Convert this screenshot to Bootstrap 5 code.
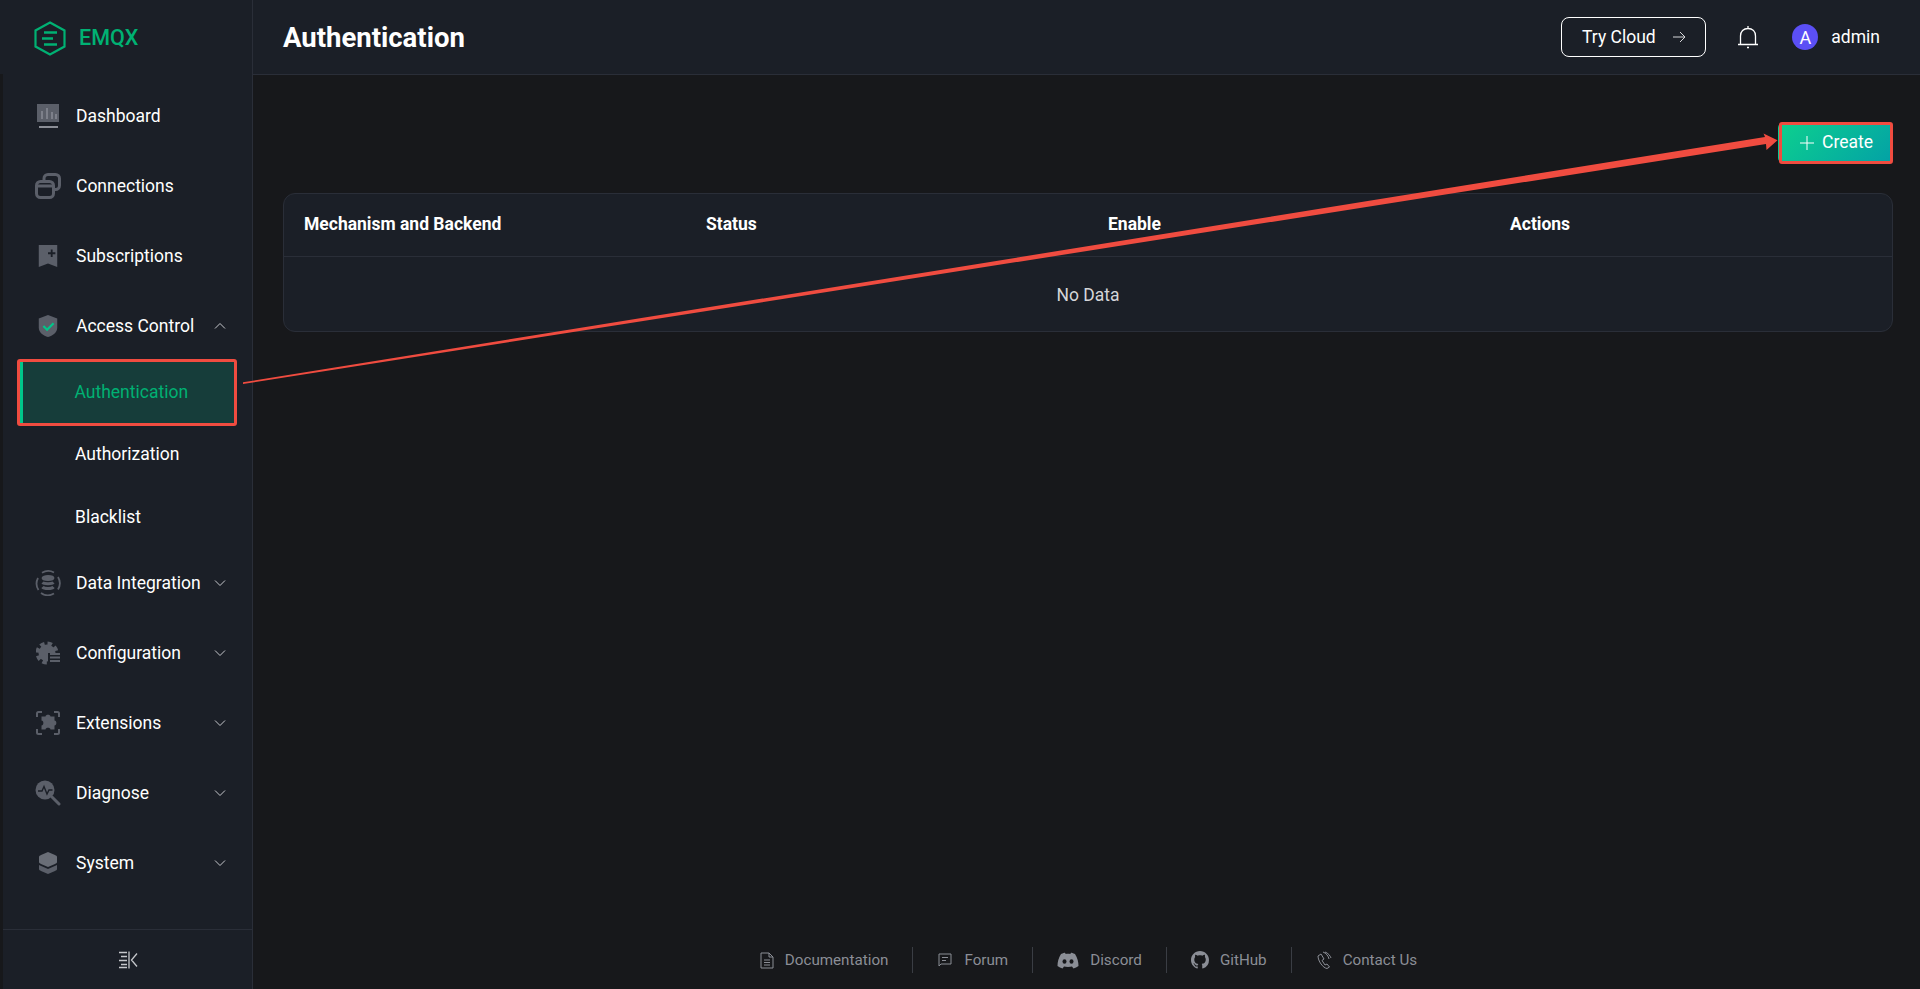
<!DOCTYPE html>
<html lang="en">
<head>
<meta charset="UTF-8" />
<meta name="viewport" content="width=device-width, initial-scale=1.0" />
<title>EMQX Authentication</title>
<link href="https://cdn.jsdelivr.net/npm/bootstrap@5.3.0/dist/css/bootstrap.min.css" rel="stylesheet">
<style>
  html, body { height: 100%; }
  body { background: #17181b; color: #fff; font-family: Roboto, "Liberation Sans", sans-serif; font-size: 17.5px; overflow: hidden; }
  .app-shell { height: 989px; position: relative; }
  .side-col { width: 253px; flex: none; }
  .logo-box { height: 74px; background: #1b1f27; border-right: 1px solid #2a2e38; padding: 2px 0 0 34px; }
  .logo-name { color: #00b173; font-size: 21.5px; font-weight: 500; margin-left: 13px; }
  .side-body { margin-left: 3px; background: #1b1f27; border-right: 1px solid #2a2e38; }
  .menu-list { padding-top: 7px; }
  .menu-row { height: 70px; padding-left: 33px; padding-right: 26px; }
  .menu-ico { width: 24px; height: 24px; margin-right: 16px; flex: none; color: #5b5f69; }
  .ico-lg { width: 26px; height: 26px; margin-left: -1px; margin-right: 15px; }
  .menu-chev { margin-left: auto; width: 12px; height: 12px; color: #c6c8cc; }
  .sub-row { height: 62.5px; padding-left: 72px; position: relative; }
  .sub-active { color: #00b173; background: #163d3a; margin: 1px 18px 0 17px; height: 61px; padding-left: 51.5px; border-left: 3px solid #00c78a; }
  .red-box { position: absolute; border: 3px solid #f04c40; border-radius: 3px; pointer-events: none; }
  .sub-active .red-box { inset: -3px -3px -3px -6px; }
  .collapse-box { height: 60px; border-top: 1px solid #2a2e38; }
  .top-bar { height: 75px; background: #1b1f27; border-bottom: 1px solid #2a2e38; padding: 0 40px 0 30px; }
  .page-title { font-size: 27.5px; font-weight: 700; margin: 0; }
  .cloud-btn { height: 40px; width: 145px; border: 1px solid #fff; border-radius: 8px; color: #fff; font-size: 17.5px; padding: 0; }
  .bell-wrap { margin-left: 31px; margin-right: 33px; line-height: 0; }
  .avatar-dot { width: 26px; height: 26px; border-radius: 50%; background: #5b4ff5; font-size: 18px; margin-right: 13px; }
  .page-body { padding: 48px 27px 0 30px; }
  .create-btn { width: 115px; height: 38px; position: relative; border: 0; border-radius: 4px; color: #fff; font-size: 17.5px; background: linear-gradient(135deg, #0dd08e, #03a1a6); padding: 0 0 1px 2px; margin-top: 1px; }
  .create-btn .red-box { inset: -2px 0 -2px 1px; }
  .table-wrap { margin-top: 31px; background: #1b1f27; border: 1px solid #2a2e38; border-radius: 12px; overflow: hidden; }
  .table-wrap .table { --bs-table-bg: transparent; --bs-table-color: #fff; --bs-table-border-color: #2a2e38; table-layout: fixed; margin: 0; }
  .table-wrap th { height: 62px; padding: 0 20px 2px; vertical-align: middle; font-weight: 700; }
  .table-wrap td { height: 75px; vertical-align: middle; text-align: center; color: #d5d6d9; border-bottom: 0; padding: 2px 0 0; }
  .foot-bar { height: 59px; color: #8b8e96; font-size: 15.2px; padding: 1px 0 0 4px; }
  .foot-link { padding: 0 24px; height: 26px; }
  .foot-link + .foot-link { border-left: 1px solid #3a3d44; }
  .foot-link svg { margin-right: 11px; }
  .arrow-layer { position: absolute; left: 0; top: 0; pointer-events: none; }
</style>
</head>
<body>
<div class="app-shell d-flex">
  <aside class="side-col d-flex flex-column">
    <div class="logo-box d-flex align-items-center">
      <svg width="32" height="35" viewBox="0 0 32 35" fill="none" stroke="#00b173" stroke-width="2.200"><path d="M16 1.500 30.500 9.500V25.500L16 33.500 1.500 25.500V9.500Z"/><path d="M10 11.500H23M8 17.500H19M10 23.500H23" stroke-width="2.400"/></svg>
      <span class="logo-name">EMQX</span>
    </div>
    <div class="side-body flex-grow-1 d-flex flex-column">
      <div class="menu-list flex-grow-1">
        <div class="menu-row d-flex align-items-center">
          <svg class="menu-ico" viewBox="0 0 24 24" fill="currentColor"><path d="M1 0H23V18H1Z"/><path d="M3 22H22V24H3Z" fill="#8b8e96"/><path d="M5 7H7V15H5ZM10 4H12V15H10ZM15 8H17V15H15ZM19 10H21V15H19Z" fill="#7d808a"/></svg>
          <span>Dashboard</span>
        </div>
        <div class="menu-row d-flex align-items-center">
          <svg class="menu-ico ico-lg" viewBox="0 0 26 26" fill="none" stroke="currentColor" stroke-width="3"><rect x="9" y="1.500" width="15.500" height="15" rx="4"/><rect x="1.500" y="8.500" width="17" height="16" rx="4" fill="#1b1f27"/><path d="M2 13H18"/></svg>
          <span>Connections</span>
        </div>
        <div class="menu-row d-flex align-items-center">
          <svg class="menu-ico" viewBox="0 0 24 26" fill="currentColor"><path d="M2 1H22V25L12 21 2 25Z"/><path d="M16 6V14M12 10H20" stroke="#1b1f27" stroke-width="2"/></svg>
          <span>Subscriptions</span>
        </div>
        <div class="menu-row d-flex align-items-center">
          <svg class="menu-ico" viewBox="0 0 24 26" fill="currentColor"><path d="M12 1 22 5V15C22 20 17 24 12 25 7 24 2 20 2 15V5Z"/><path d="M7 13 11 17 18 10" fill="none" stroke="#00c78a" stroke-width="2.400"/></svg>
          <span>Access Control</span>
          <svg class="menu-chev" viewBox="0 0 12 12" fill="none" stroke="currentColor"><path d="M1 8.500 6 3.500 11 8.500"/></svg>
        </div>
        <div class="sub-row sub-active d-flex align-items-center position-relative">Authentication<span class="red-box"></span></div>
        <div class="sub-row d-flex align-items-center">Authorization</div>
        <div class="sub-row d-flex align-items-center">Blacklist</div>
        <div class="menu-row d-flex align-items-center">
          <svg class="menu-ico ico-lg" viewBox="0 0 26 26" fill="none" stroke="currentColor" stroke-width="1.800"><path d="M3.500 20A12 12 0 0 1 3 8M7 2.800A12 12 0 0 1 19 2.500M23 7A12 12 0 0 1 23 19.500M19 23.500A12 12 0 0 1 6 23"/><ellipse cx="13" cy="8" rx="5.500" ry="2" fill="currentColor"/><path d="M7.500 12.500C9 14 17 14 18.500 12.500M7.500 17C9 19 17 19 18.500 17" stroke-width="3"/></svg>
          <span>Data Integration</span>
          <svg class="menu-chev" viewBox="0 0 12 12" fill="none" stroke="currentColor"><path d="M1 3.500 6 8.500 11 3.500"/></svg>
        </div>
        <div class="menu-row d-flex align-items-center">
          <svg class="menu-ico" viewBox="0 0 24 24" fill="currentColor"><circle cx="11" cy="12" r="8.500"/><circle cx="11" cy="12" r="9.500" fill="none" stroke="currentColor" stroke-width="4" stroke-dasharray="4.500 3"/><path d="M12 12H24V23H12Z" fill="#1b1f27"/><path d="M14 13H24M14 16.500H24M14 20H24" stroke="currentColor" stroke-width="2"/></svg>
          <span>Configuration</span>
          <svg class="menu-chev" viewBox="0 0 12 12" fill="none" stroke="currentColor"><path d="M1 3.500 6 8.500 11 3.500"/></svg>
        </div>
        <div class="menu-row d-flex align-items-center">
          <svg class="menu-ico" viewBox="0 0 24 24" fill="currentColor"><path d="M1 6V2.500Q1 1 2.500 1H6M18 1H21.500Q23 1 23 2.500V6M23 18V21.500Q23 23 21.500 23H18M6 23H2.500Q1 23 1 21.500V18" fill="none" stroke="currentColor" stroke-width="2"/><path d="M9.500 5.500C9.500 3 14.500 3 14.500 5.500H18.500V9.500C21 9.500 21 14.500 18.500 14.500V18.500H14.500C14.500 16 9.500 16 9.500 18.500H5.500V14.500C8 14.500 8 9.500 5.500 9.500V5.500Z"/></svg>
          <span>Extensions</span>
          <svg class="menu-chev" viewBox="0 0 12 12" fill="none" stroke="currentColor"><path d="M1 3.500 6 8.500 11 3.500"/></svg>
        </div>
        <div class="menu-row d-flex align-items-center">
          <svg class="menu-ico ico-lg" viewBox="0 0 26 26" fill="currentColor"><circle cx="10" cy="10" r="9.500"/><path d="M17 17 24 24" stroke="currentColor" stroke-width="3" stroke-linecap="round"/><path d="M3 11H7L9 6.500 12 14 14 10H17.500" fill="none" stroke="#1b1f27" stroke-width="1.400"/></svg>
          <span>Diagnose</span>
          <svg class="menu-chev" viewBox="0 0 12 12" fill="none" stroke="currentColor"><path d="M1 3.500 6 8.500 11 3.500"/></svg>
        </div>
        <div class="menu-row d-flex align-items-center">
          <svg class="menu-ico" viewBox="0 0 24 24" fill="currentColor"><path d="M3 14V18C3 19 4 19.500 5 20L12 23 19 20C20 19.500 21 19 21 18V14L12 18Z"/><path d="M12 1 19 4C20 4.500 21 5 21 6V11C21 12 20 12.500 19 13L12 16 5 13C4 12.500 3 12 3 11V6C3 5 4 4.500 5 4Z" fill="#6a6e77"/></svg>
          <span>System</span>
          <svg class="menu-chev" viewBox="0 0 12 12" fill="none" stroke="currentColor"><path d="M1 3.500 6 8.500 11 3.500"/></svg>
        </div>
      </div>
      <div class="collapse-box d-flex align-items-center justify-content-center">
        <svg width="20" height="18" viewBox="0 0 20 18" fill="none" stroke="#c6c8cc" stroke-width="1.300"><path d="M1 1.500H9M3 5.500H9M1 9.500H9M3 13.500H9M1 16.500H9M11 .5V17.500M19 2.500 13.500 9 19 15.500"/></svg>
      </div>
    </div>
  </aside>

  <div class="flex-grow-1 d-flex flex-column">
    <header class="top-bar d-flex align-items-center">
      <h1 class="page-title">Authentication</h1>
      <button type="button" class="btn cloud-btn ms-auto d-flex align-items-center justify-content-center gap-2">Try Cloud
        <svg class="ms-2" width="14" height="14" viewBox="0 0 14 14" fill="none" stroke="#d5d6d9"><path d="M1 7H13M8 2 13 7 8 12"/></svg>
      </button>
      <span class="bell-wrap">
        <svg width="22" height="24" viewBox="0 0 22 24" fill="none" stroke="#fff" stroke-width="1.300"><path d="M1 19.500H21M3.500 19.500V11C3.500 6.500 6.500 3.500 11 3.500S18.500 6.500 18.500 11V19.500M11 1V3.500"/><path d="M10 22.500H12" stroke-width="1.600"/></svg>
      </span>
      <span class="avatar-dot d-flex align-items-center justify-content-center">A</span>
      <span>admin</span>
    </header>

    <main class="page-body flex-grow-1">
      <div class="d-flex justify-content-end">
        <button type="button" class="btn create-btn d-flex align-items-center justify-content-center gap-2">
          <svg width="14" height="14" viewBox="0 0 14 14" stroke="#fff"><path d="M7 0V14M0 7H14"/></svg>Create
          <span class="red-box"></span>
        </button>
      </div>
      <div class="table-wrap">
        <table class="table">
          <thead>
            <tr><th>Mechanism and Backend</th><th>Status</th><th>Enable</th><th>Actions</th></tr>
          </thead>
          <tbody>
            <tr><td colspan="4">No Data</td></tr>
          </tbody>
        </table>
      </div>
    </main>

    <footer class="foot-bar d-flex align-items-center justify-content-center">
      <span class="foot-link d-flex align-items-center">
        <svg width="14" height="17" viewBox="0 0 14 17" fill="none" stroke="currentColor"><path d="M1 1H9L13 5V16H1ZM9 1V5H13M4 8H10M4 10.500H10M4 13H10"/></svg>Documentation</span>
      <span class="foot-link d-flex align-items-center">
        <svg width="16" height="16" viewBox="0 0 16 16" fill="none" stroke="currentColor"><path d="M2 2H14V12H4L2 14ZM5 5.500H11M5 8.500H9"/></svg>Forum</span>
      <span class="foot-link d-flex align-items-center">
        <svg width="22" height="17" viewBox="0 0 22 17" fill="currentColor"><path d="M4 2C6 1 7.500.7 8 .7L8.700 2C10 1.800 12 1.800 13.300 2L14 .7C14.500.7 16 1 18 2 20.500 6 21.500 10 21.500 14 20 15.300 18 16 16.500 16.500L15 14.500C13 15.100 9 15.100 7 14.500L5.500 16.500C4 16 2 15.300.5 14 .5 10 1.500 6 4 2Z"/><ellipse cx="7.500" cy="9.500" rx="2" ry="2.300" fill="#17181b"/><ellipse cx="14.500" cy="9.500" rx="2" ry="2.300" fill="#17181b"/></svg>Discord</span>
      <span class="foot-link d-flex align-items-center">
        <svg width="18" height="18" viewBox="0 0 16 16" fill="currentColor"><path d="M8 0C3.580 0 0 3.580 0 8c0 3.540 2.290 6.530 5.470 7.590.4.070.55-.17.55-.38 0-.19-.01-.82-.01-1.490-2.010.37-2.530-.49-2.690-.94-.09-.23-.48-.94-.82-1.130-.28-.15-.68-.52-.01-.53.63-.01 1.080.58 1.230.82.720 1.210 1.870.870 2.330.660.070-.520.280-.870.510-1.070-1.780-.2-3.640-.890-3.640-3.950 0-.870.310-1.590.820-2.150-.080-.2-.360-1.020.080-2.120 0 0 .670-.210 2.200.820.640-.180 1.320-.270 2-.270s1.360.090 2 .270c1.530-1.040 2.200-.820 2.200-.820.440 1.100.160 1.920.080 2.120.510.560.820 1.270.820 2.150 0 3.070-1.870 3.750-3.650 3.950.290.250.540.730.540 1.480 0 1.070-.010 1.930-.010 2.200 0 .210.150.460.550.380A8.010 8.010 0 0 0 16 8c0-4.420-3.580-8-8-8Z"/></svg>GitHub</span>
      <span class="foot-link d-flex align-items-center">
        <svg width="16" height="18" viewBox="0 0 16 18" fill="none" stroke="currentColor"><path d="M2 5 5 3 8 8 6 9.500 9 14 11 13 13.500 16 11 17.500C7 17 2 10 2 5ZM7 1C10 2 12.500 5 13 8M9 1C12 2 14.500 5 15 7"/></svg>Contact Us</span>
    </footer>
  </div>

  <svg class="arrow-layer" width="1920" height="989" viewBox="0 0 1920 989">
    <path d="M243 382.300 1765 137 1763.500 133.500 1777.500 140.200 1766.500 150 1766 144 243 384Z" fill="#f04c40"/>
  </svg>
</div>
<script src="https://cdn.jsdelivr.net/npm/bootstrap@5.3.0/dist/js/bootstrap.bundle.min.js"></script>
</body>
</html>
